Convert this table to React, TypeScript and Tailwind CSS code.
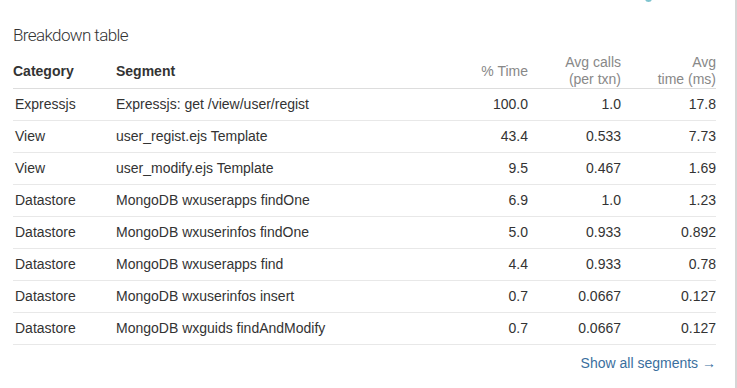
const rows = [
  { category: 'Expressjs', segment: 'Expressjs: get /view/user/regist', pct: '100.0', calls: '1.0', time: '17.8' },
  { category: 'View', segment: 'user_regist.ejs Template', pct: '43.4', calls: '0.533', time: '7.73' },
  { category: 'View', segment: 'user_modify.ejs Template', pct: '9.5', calls: '0.467', time: '1.69' },
  { category: 'Datastore', segment: 'MongoDB wxuserapps findOne', pct: '6.9', calls: '1.0', time: '1.23' },
  { category: 'Datastore', segment: 'MongoDB wxuserinfos findOne', pct: '5.0', calls: '0.933', time: '0.892' },
  { category: 'Datastore', segment: 'MongoDB wxuserapps find', pct: '4.4', calls: '0.933', time: '0.78' },
  { category: 'Datastore', segment: 'MongoDB wxuserinfos insert', pct: '0.7', calls: '0.0667', time: '0.127' },
  { category: 'Datastore', segment: 'MongoDB wxguids findAndModify', pct: '0.7', calls: '0.0667', time: '0.127' },
]

const cols = 'grid grid-cols-[103px_332px_80px_93px_95px]'

export default function App() {
  return (
    <div className="relative h-[388px] w-[737px] overflow-hidden bg-white font-['Liberation_Sans',Arial,sans-serif] text-[14px] text-[#333]">
      {/* bit of the chart above, cut off */}
      <div className="absolute left-[645px] top-[-5px] h-[7px] w-[7px] rounded-full border-2 border-[#7fc4cf]" />

      <div className="flex h-full">
        <div className="w-[735px] pl-[13px] pr-[19px]">
          <h2 className="pt-[24px] font-['Roboto',sans-serif] text-[17px] font-light leading-[22px] tracking-[-0.6px] text-[#333]">
            Breakdown table
          </h2>

          <div className={`${cols} mt-[8px] items-center border-b border-[#ddd] leading-[17px]`}>
            <div className="font-bold">Category</div>
            <div className="font-bold">Segment</div>
            <div className="text-right text-[#888]">% Time</div>
            <div className="text-right text-[#888]">
              Avg calls
              <br />
              (per txn)
            </div>
            <div className="text-right text-[#888]">
              Avg
              <br />
              time (ms)
            </div>
          </div>

          {rows.map((r, i) => (
            <div key={i} className={`${cols} h-[32px] items-center border-b border-[#e8e8e8]`}>
              <div className="pl-[2px]">{r.category}</div>
              <div>{r.segment}</div>
              <div className="text-right">{r.pct}</div>
              <div className="text-right">{r.calls}</div>
              <div className="text-right">{r.time}</div>
            </div>
          ))}

          <div className="mt-[9px] text-right text-[14px] leading-[18px] text-[#3a6f9e]">
            Show all segments →
          </div>
        </div>
        <div className="w-[2px] bg-[#d6d6d6]" />
      </div>
    </div>
  )
}
